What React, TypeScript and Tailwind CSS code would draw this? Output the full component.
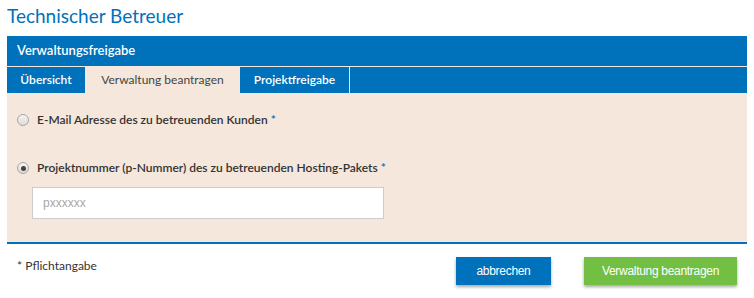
import React from "react";

const Radio = ({ checked }: { checked?: boolean }) => (
  <span className="flex h-[12px] w-[12px] shrink-0 items-center justify-center rounded-full border border-[#a6a6a6] bg-gradient-to-b from-[#f4f4f4] to-[#dcdcdc]">
    {checked && <span className="h-[5px] w-[5px] rounded-full bg-[#444]" />}
  </span>
);

export default function App() {
  return (
    <div className="h-[298px] w-[754px] overflow-hidden bg-white font-['Lato',sans-serif] text-[#333]">
      <h1 className="px-[7px] pt-[3px] text-[19px] leading-[26px] text-[#0071bb]">Technischer Betreuer</h1>
      <div className="mx-[7px] mt-[7px]">
        <div className="flex h-[30px] items-center bg-[#0071bb] px-[10px] text-[13px] font-semibold text-white">
          Verwaltungsfreigabe
        </div>
        <div className="h-px bg-[#f5e7db]" />
        <div className="flex h-[26px] bg-[#0071bb] text-[12px]">
          <div className="flex w-[78px] items-center justify-center font-semibold text-white">Übersicht</div>
          <div className="flex w-[155px] items-center justify-center bg-[#f5e7db] text-[#444]">Verwaltung beantragen</div>
          <div className="flex w-[110px] items-center justify-center border-r border-[#f5e7db] font-semibold text-white">Projektfreigabe</div>
        </div>
        <div className="h-[151px] border-b-2 border-[#0071bb] bg-[#f5e7db] px-[10px] pt-[20px]">
          <label className="flex items-center gap-[8px] text-[12px] font-semibold leading-[14px]">
            <Radio />
            <span>
              E-Mail Adresse des zu betreuenden Kunden <span className="text-[#0071bb]">*</span>
            </span>
          </label>
          <label className="mt-[34px] flex items-center gap-[8px] text-[12px] font-semibold leading-[14px]">
            <Radio checked />
            <span>
              Projektnummer (p-Nummer) des zu betreuenden Hosting-Pakets <span className="text-[#0071bb]">*</span>
            </span>
          </label>
          <div className="ml-[15px] mt-[12px] flex h-[32px] w-[352px] items-center border border-[#cccccc] bg-white px-[10px] font-['Liberation_Sans',sans-serif] text-[12px] text-[#a8a8a8]">
            pxxxxxx
          </div>
        </div>
      </div>
      <div className="flex items-start justify-between pl-[17px] pr-[17px] pt-[13px]">
        <div className="pt-[1px] text-[12px] leading-[16px]">
          <span className="text-[#333]">*</span> Pflichtangabe
        </div>
        <div className="flex gap-[33px] font-['Liberation_Sans',sans-serif] text-[12px] tracking-[-0.3px] text-white">
          <button className="h-[28px] w-[95px] bg-[#0071bb] shadow-[0_2px_3px_rgba(0,0,0,0.35)]">abbrechen</button>
          <button className="h-[28px] w-[153px] bg-[#72bf44] shadow-[0_2px_3px_rgba(0,0,0,0.35)]">Verwaltung beantragen</button>
        </div>
      </div>
    </div>
  );
}
